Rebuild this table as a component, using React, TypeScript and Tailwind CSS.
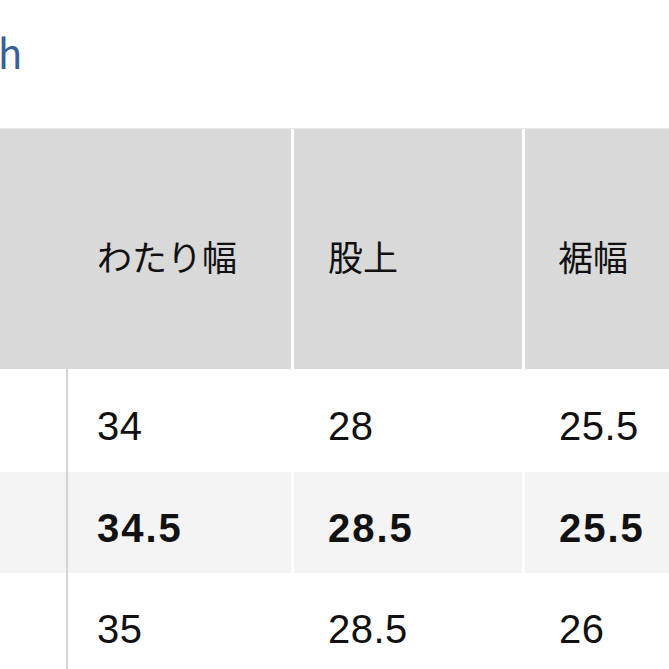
const jp = "font-['Hiragino_Sans','Noto_Sans_CJK_JP',sans-serif]";
const num = "font-['Helvetica','Liberation_Sans',Arial,sans-serif]";

const rows = [
  { vals: ['34', '28', '25.5'], bold: false, bg: 'bg-white' },
  { vals: ['34.5', '28.5', '25.5'], bold: true, bg: 'bg-[#f4f4f4]' },
  { vals: ['35', '28.5', '26'], bold: false, bg: 'bg-white' },
];

export default function App() {
  return (
    <div className="w-[669px] h-[669px] overflow-hidden bg-white flex flex-col">
      <div className="h-[128px] shrink-0 flex items-start">
        <span className={`${jp} text-[40px] leading-none text-[#3b5f97] mt-[32px] -ml-[2px]`}>h</span>
      </div>

      <div className="h-[241px] shrink-0 flex gap-[3px] border-t border-[#e6e6e6]">
        <div className="w-[291px] bg-[#d9d9d9] flex items-center pl-[97px] pt-[14px]">
          <span className={`${jp} text-[35px] text-[#111]`}>わたり幅</span>
        </div>
        <div className="w-[228px] bg-[#d9d9d9] flex items-center pl-[34px] pt-[14px]">
          <span className={`${jp} text-[35px] text-[#111]`}>股上</span>
        </div>
        <div className="flex-1 bg-[#d9d9d9] flex items-center pl-[33px] pt-[14px]">
          <span className={`${jp} text-[35px] text-[#111]`}>裾幅</span>
        </div>
      </div>

      <div className="flex-1 flex flex-col border-b-2 border-[#c8c8c8]">
        {rows.map((r, i) => (
          <div key={i} className={`flex ${i === 0 ? 'h-[103px]' : 'h-[101px]'}`}>
            <div className={`w-[66px] ${r.bg}`} />
            <div className="w-[2px] bg-[#d4d4d4]" />
            <div className="flex-1 flex gap-[3px]">
              {r.vals.map((v, j) => (
                <div
                  key={j}
                  className={`${r.bg} flex items-center pt-[10px] ${
                    j === 0 ? 'w-[223px] pl-[29px]' : j === 1 ? 'w-[228px] pl-[34px]' : 'flex-1 pl-[34px]'
                  }`}
                >
                  <span
                    className={`${num} text-[40px] text-[#111] ${
                      r.bold ? 'font-bold tracking-[2px]' : 'font-normal tracking-[0.5px]'
                    }`}
                  >
                    {v}
                  </span>
                </div>
              ))}
            </div>
          </div>
        ))}
      </div>
    </div>
  );
}
